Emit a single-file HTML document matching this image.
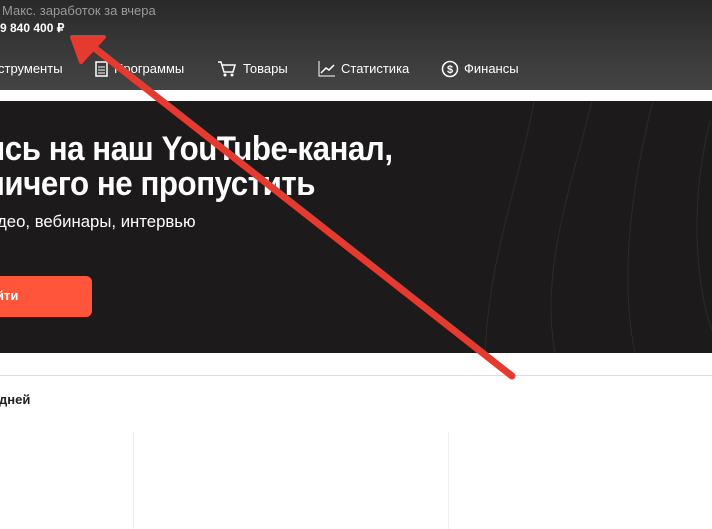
<html><head><style>
body{margin:0;width:712px;height:529px;overflow:hidden;background:#fff;font-family:"Liberation Sans",sans-serif;position:relative}
.hdr{position:absolute;left:0;top:0;width:712px;height:90px;background:linear-gradient(#292929,#3a3a3a 60%,#444)}
.t{position:absolute;white-space:nowrap}
.nav{color:#fff;font-size:13px;top:61px}
.ban{position:absolute;left:0;top:101px;width:712px;height:252px;background:#1c1a1a;overflow:hidden}
h1{position:absolute;margin:0;left:-14px;top:31px;color:#fff;font-size:34px;line-height:35px;font-weight:bold;letter-spacing:-0.5px;white-space:nowrap;transform:scaleX(0.92);transform-origin:0 0}
</style></head><body>
<div class="hdr"></div>
<div class="t" style="left:2px;top:3px;font-size:13px;color:#9a9a9a">Макс. заработок за вчера</div>
<div class="t" style="left:0;top:21px;font-size:12px;color:#fff;font-weight:bold">9 840 400 ₽</div>
<div class="t nav" style="left:-2px">струменты</div>
<svg class="t" style="left:95px;top:61px" width="14" height="16"><rect x="1" y="1" width="11" height="14" fill="none" stroke="#fff" stroke-width="1.5"/><path d="M3 6h7M3 9h7M3 12h7" stroke="#fff"/></svg>
<div class="t nav" style="left:114px">Программы</div>
<svg class="t" style="left:217px;top:60px" width="20" height="18"><path d="M1 2h3l3 10h9l2-7H5" fill="none" stroke="#fff" stroke-width="1.5"/><circle cx="8" cy="15" r="1.5" fill="#fff"/><circle cx="15" cy="15" r="1.5" fill="#fff"/></svg>
<div class="t nav" style="left:243px">Товары</div>
<svg class="t" style="left:318px;top:60px" width="18" height="17"><path d="M1 1v15h16" fill="none" stroke="#fff"/><path d="M3 13l5-5 3 2 5-5" fill="none" stroke="#fff" stroke-width="1.5"/></svg>
<div class="t nav" style="left:341px">Статистика</div>
<svg class="t" style="left:441px;top:60px" width="18" height="18"><circle cx="9" cy="9" r="7.5" fill="none" stroke="#fff" stroke-width="1.5"/><text x="9" y="13" font-size="11" font-weight="bold" fill="#fff" text-anchor="middle" font-family="Liberation Sans">$</text></svg>
<div class="t nav" style="left:464px">Финансы</div>
<div class="ban">
<svg style="position:absolute;left:470px;top:0" width="242" height="252"><g fill="none" stroke="#2c2a2a" stroke-width="1"><path d="M64 0C50 80 20 150 15 252"/><path d="M122 0C100 90 70 170 85 252"/><path d="M183 0C160 90 150 180 165 252"/><path d="M240 20C220 100 225 180 242 230"/></g></svg>
<h1>ись на наш YouTube-канал,<br>ничего не пропустить</h1>
<div class="t" style="left:-3px;top:111px;color:#fff;font-size:17px;transform:scaleX(0.985);transform-origin:0 0">део, вебинары, интервью</div>
<div style="position:absolute;left:-20px;top:175px;width:112px;height:41px;background:#ff553a;border-radius:6px"></div>
<div class="t" style="left:-4px;top:187px;color:#fff;font-size:13px;font-weight:bold">йти</div>
</div>
<div style="position:absolute;left:0;top:375px;width:712px;height:1px;background:#ddd"></div>
<div class="t" style="left:-1px;top:392px;font-size:13px;font-weight:bold;color:#222">дней</div>
<div style="position:absolute;left:133px;top:432px;width:1px;height:97px;background:#eee"></div>
<div style="position:absolute;left:448px;top:432px;width:1px;height:97px;background:#eee"></div>
<svg style="position:absolute;left:0;top:0" width="712" height="529"><path d="M512 376L92 46" stroke="#e53a30" stroke-width="7" stroke-linecap="round"/><path d="M72 37L104 37L81 62Z" fill="#e53a30" stroke="#e53a30" stroke-width="4" stroke-linejoin="round"/></svg>
</body></html>
